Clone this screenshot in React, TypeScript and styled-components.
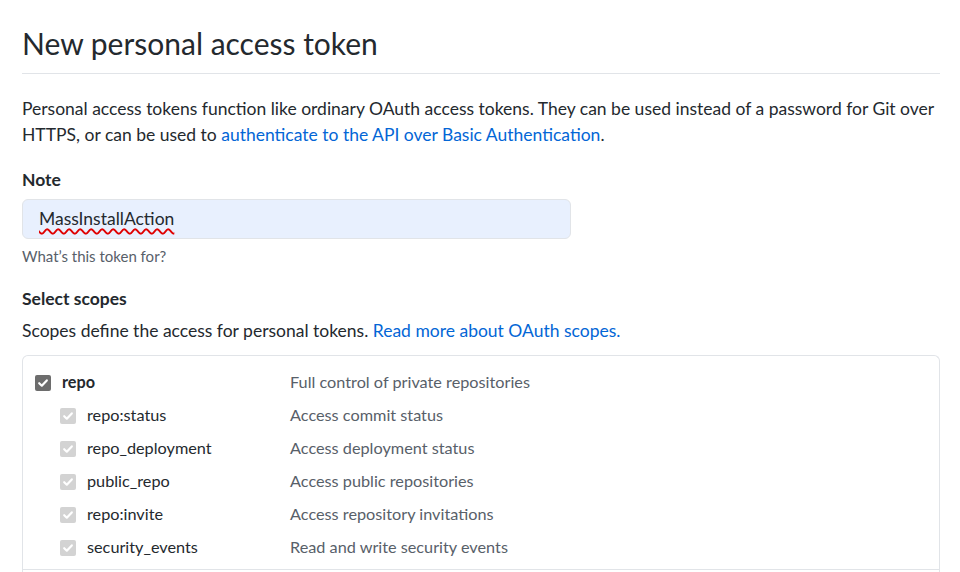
import React from 'react';
import styled, { createGlobalStyle } from 'styled-components';

const GlobalStyle = createGlobalStyle`
  html, body {
    margin: 0;
    padding: 0;
    background: #ffffff;
  }
  body {
    font-family: Lato, "Liberation Sans", sans-serif;
    color: #24292e;
    font-size: 17.5px;
    line-height: 1.5;
  }
  * {
    box-sizing: border-box;
  }
`;

const Page = styled.div`
  width: 918px;
  margin-left: 22px;
  padding-top: 24px;
`;

const Subhead = styled.div`
  padding-bottom: 10px;
  border-bottom: 1px solid #e1e4e8;
`;

const Heading = styled.h1`
  margin: 0;
  font-size: 30px;
  font-weight: 400;
  line-height: 1.3;
`;

const Intro = styled.p`
  margin: 22px 0 19px;
  line-height: 26px;
`;

const Link = styled.a`
  color: #0366d6;
  text-decoration: none;
`;

const Label = styled.label`
  display: block;
  font-weight: 700;
  line-height: 26px;
  margin-bottom: 6px;
`;

const TextInput = styled.div`
  width: 549px;
  height: 40px;
  padding: 0 16px;
  display: flex;
  align-items: center;
  background: #e8f0fe;
  border: 1px solid #e1e4e8;
  border-radius: 6px;
`;

const Misspelled = styled.span`
  text-decoration: underline wavy #e00000;
  text-decoration-thickness: 1.5px;
  text-underline-offset: 3px;
`;

const Note = styled.p`
  margin: 6px 0 19px;
  font-size: 15px;
  line-height: 22px;
  color: #586069;
`;

const Lead = styled.p`
  margin: 2px 0 11px;
  line-height: 26px;
`;

const ScopeBox = styled.div`
  border: 1px solid #e1e4e8;
  border-bottom: none;
  border-radius: 6px 6px 0 0;
  font-size: 16.25px;
`;

const ScopeGroup = styled.div`
  padding: 10px 0 5px;
  border-bottom: 1px solid #e1e4e8;
`;

const Row = styled.div`
  display: flex;
  align-items: center;
  height: 33px;
`;

const NameCell = styled.div<{ $indent: number }>`
  display: flex;
  align-items: center;
  gap: 11px;
  width: 267px;
  padding-left: ${({ $indent }) => $indent}px;
`;

const Box = styled.span<{ $muted: boolean }>`
  width: 16px;
  height: 16px;
  border-radius: 2px;
  display: inline-flex;
  align-items: center;
  justify-content: center;
  background: ${({ $muted }) => ($muted ? '#d3d3d3' : '#6d6d6d')};
  flex-shrink: 0;
`;

const ScopeName = styled.span<{ $bold: boolean }>`
  font-weight: ${({ $bold }) => ($bold ? 700 : 400)};
`;

const ScopeDesc = styled.span`
  color: #586069;
`;

type Scope = { name: string; desc: string; child?: boolean };

const scopes: Scope[][] = [
  [
    { name: 'repo', desc: 'Full control of private repositories' },
    { name: 'repo:status', desc: 'Access commit status', child: true },
    { name: 'repo_deployment', desc: 'Access deployment status', child: true },
    { name: 'public_repo', desc: 'Access public repositories', child: true },
    { name: 'repo:invite', desc: 'Access repository invitations', child: true },
    { name: 'security_events', desc: 'Read and write security events', child: true },
  ],
  [{ name: 'workflow', desc: 'Update github action workflows' }],
];

const Check = ({ muted }: { muted: boolean }) => (
  <Box $muted={muted}>
    <svg width="12" height="12" viewBox="0 0 12 12">
      <path d="M2.2 6.2 L4.8 8.7 L9.8 3.4" fill="none" stroke="#ffffff" strokeWidth="2.2" strokeLinecap="round" strokeLinejoin="round" />
    </svg>
  </Box>
);

export default function App() {
  return (
    <Page>
      <GlobalStyle />
      <Subhead>
        <Heading>New personal access token</Heading>
      </Subhead>
      <Intro>
        Personal access tokens function like ordinary OAuth access tokens. They can be used instead of a password for Git over
        HTTPS, or can be used to <Link href="#">authenticate to the API over Basic Authentication</Link>.
      </Intro>
      <Label>Note</Label>
      <TextInput>
        <Misspelled>MassInstallAction</Misspelled>
      </TextInput>
      <Note>What’s this token for?</Note>
      <Label>Select scopes</Label>
      <Lead>
        Scopes define the access for personal tokens. <Link href="#">Read more about OAuth scopes.</Link>
      </Lead>
      <ScopeBox>
        {scopes.map((group, gi) => (
          <ScopeGroup key={gi}>
            {group.map((s) => (
              <Row key={s.name}>
                <NameCell $indent={s.child ? 37 : 12}>
                  <Check muted={!!s.child} />
                  <ScopeName $bold={!s.child}>{s.name}</ScopeName>
                </NameCell>
                <ScopeDesc>{s.desc}</ScopeDesc>
              </Row>
            ))}
          </ScopeGroup>
        ))}
      </ScopeBox>
    </Page>
  );
}
